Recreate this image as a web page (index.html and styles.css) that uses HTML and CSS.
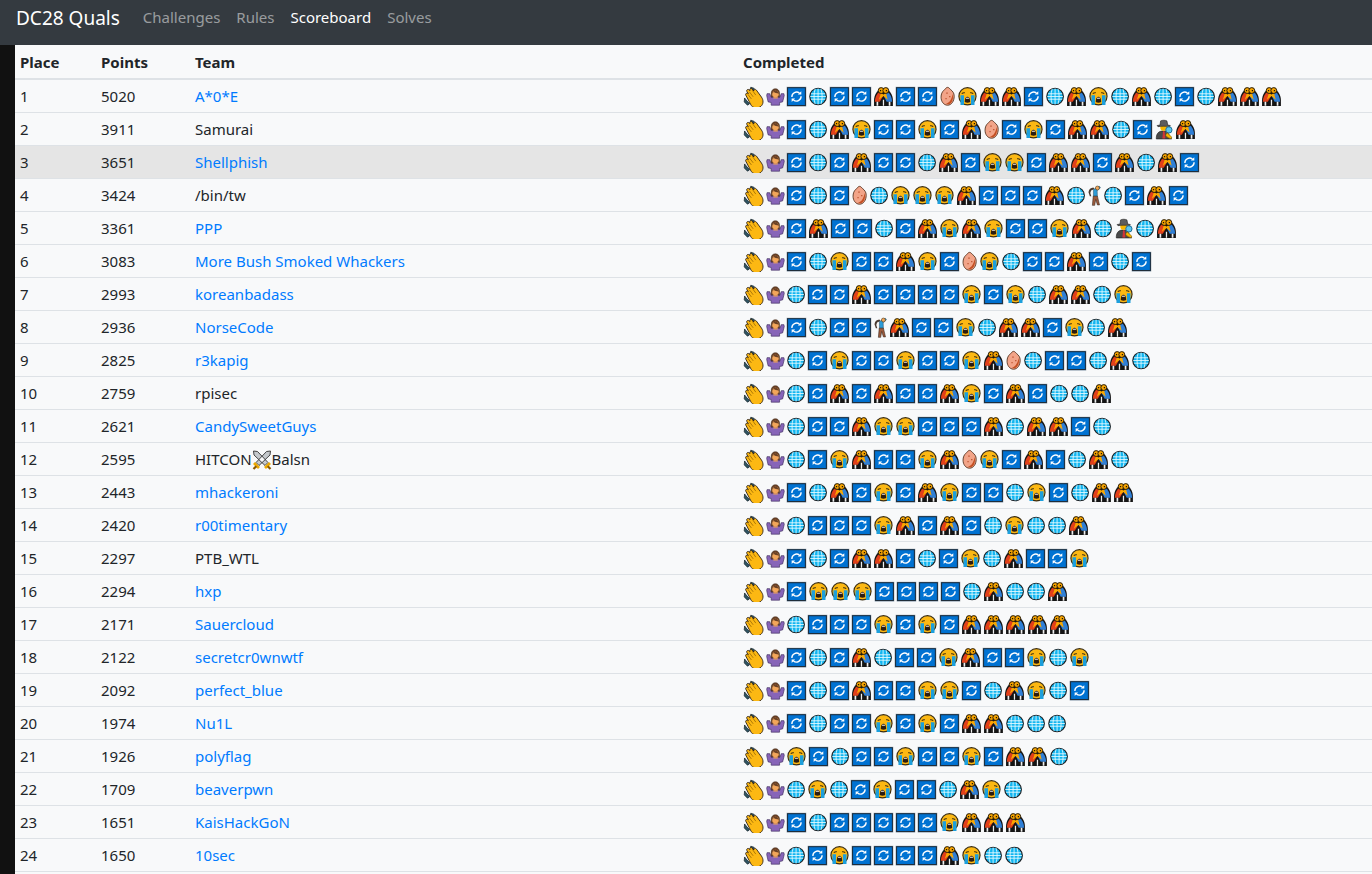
FILE: index.html
```html
<!DOCTYPE html>
<html lang="en">
<head>
<meta charset="UTF-8">
<title>DC28 Quals</title>
<link rel="stylesheet" href="styles.css">
</head>
<body>
<svg class="defs" aria-hidden="true">
  <symbol id="w" viewBox="-1 -.5 22 21">
    <path d="M7 .5l3.500 1.200-.9 2.300-3.300-1.200zM.6 11.500l-.3 4 3.300 3.400 2.200-1.500-2.600-2.700z" fill="#2f5563" stroke="#1c2a30" stroke-width=".8"/>
    <path d="M2 8.900c-1.100-1.700 1-3.300 2.500-1.900L3 5c-1-1.700 1.200-3.100 2.500-1.600l.5.600c-.8-1.700 1.400-2.900 2.500-1.500l1.500 1.900c-.4-1.600 1.700-2.300 2.700-1l5.200 7.200c2.300 3.300 2.100 7.200-.6 9.400-2.900 2.500-7.200 2.200-9.800-.7z" fill="#fcb813" stroke="#2a2018" stroke-width=".9" stroke-linejoin="round"/>
    <path d="M5.500 5.200l3.900 5.100M8.400 3.500l3.700 5.100M4 7.800l3.600 4.700" fill="none" stroke="#8a5c00" stroke-width=".7"/>
  </symbol>
  <symbol id="s" viewBox="-1.500 -1 24 22">
    <path d="M5.400 7.500c-.9-8.300 10.300-8.300 9.400 0l.4 4.500H5z" fill="#6b4226" stroke="#3a2414" stroke-width=".5"/>
    <path d="M.8 6.800h3l1.400 4h10l1.400-4h3l.4 2.200-1.800 7-3.400.7v3H5.400v-3L2 16 .4 9z" fill="#8764b8" stroke="#3b2b5c" stroke-width=".7" stroke-linejoin="round"/>
    <circle cx="10.200" cy="7.300" r="3.700" fill="#f2a65a"/>
    <path d="M6.400 6.800c.5-4.200 7.200-4.200 7.700 0-2.600-.2-5.100-.6-5.900-2-.2.900-1 1.700-1.800 2z" fill="#6b4226"/>
    <path d="M7.800 10.800h5v1.300h-5z" fill="#f2a65a"/>
  </symbol>
  <symbol id="r" viewBox="0 0 21 20">
    <rect x=".9" y="1" width="18.200" height="18.200" fill="#0072d2" stroke="#a4a8ac" stroke-width=".6"/>
    <rect x="1.500" y="1.600" width="17" height="17" fill="none" stroke="#1f2d3a" stroke-width="1"/>
    <path d="M5.600 10.400a4.400 4.400 0 0 1 7.300-3.500M14.400 9.800a4.400 4.400 0 0 1-7.300 3.500" fill="none" stroke="#fff" stroke-width="1.300"/>
    <path d="M14.600 4.900v3.300h-3.300zM5.400 15.300V12h3.300z" fill="#fff"/>
  </symbol>
  <symbol id="g" viewBox="0 0 20 20">
    <circle cx="9.600" cy="10" r="7.900" fill="#12b5f0" stroke="#1c2226" stroke-width="1.100"/>
    <path d="M2.800 7.400h13.600M2.200 10h14.800M2.800 12.600h13.600M9.600 2.500v15M6.800 3c-1.400 4-1.400 10 0 14M12.400 3c1.400 4 1.400 10 0 14" fill="none" stroke="#e8fbff" stroke-width=".8"/>
  </symbol>
  <symbol id="c" viewBox="0 0 21 20">
    <circle cx="10" cy="9.800" r="8.200" fill="#fcb813" stroke="#3a2c10" stroke-width="1.100"/>
    <path d="M4.500 7.200c1-.8 2-1 3-.8M12.500 6.400c1-.2 2 0 3 .8" fill="none" stroke="#3a2c10" stroke-width="1"/>
    <path d="M3.300 8.800h3.400v9.200H3.300zM13.300 8.800h3.400v9.200h-3.400z" fill="#1c9fdc"/>
    <path d="M7.400 15.200c0-3.200 1.100-5 2.600-5s2.600 1.800 2.600 5c-1.500.9-3.700.9-5.200 0z" fill="#2b1c10"/>
    <path d="M8.600 11.200h2.800v.9H8.600z" fill="#fff"/>
  </symbol>
  <symbol id="f" viewBox="0 0 21 20">
    <path d="M1 19v-5.500C1 8.500 4 4 7 3l3-.8 3 .8c3 1 6 5.500 6 10.500V19z" fill="#141414"/>
    <path d="M1.800 15c0-4 1.500-7.500 4.700-9.500L10 9l-3.500 6z" fill="#e2401a"/>
    <path d="M18.200 15c0-4-1.500-7.500-4.700-9.500L10 9l3 6z" fill="#2f7fd6"/>
    <path d="M3.400 15h1.600v3.800H3.400zM9.400 13h1.200v5.800H9.400zM15 15h1.600v3.800H15z" fill="#f0f0f0"/>
    <path d="M5.600 13l4.400-3.500 4 3.500-1.500-6L10 8 7.500 7z" fill="#f9a800"/>
    <circle cx="7.800" cy="4.300" r="2.800" fill="#f7a400" stroke="#1c1408" stroke-width=".9"/>
    <circle cx="12.200" cy="4.300" r="2.800" fill="#f7a400" stroke="#1c1408" stroke-width=".9"/>
    <path d="M6.600 3.800h1.200v1.100H6.600zM12.200 3.800h1.200v1.100h-1.200z" fill="#1c1408"/>
  </symbol>
  <symbol id="p" viewBox="0 0 17 20">
    <path d="M8 1.300c1.300 0 2 1.400 3 2.200 1.700 1.400 3.300 3 3.300 6.200 0 4.700-2.500 8.600-6.300 8.600s-6.200-3.700-6.200-7.600c0-3 1-5.200 2.800-6.700 1-.8 2-2.700 3.400-2.700z" fill="#f2a488" stroke="#5e3c28" stroke-width=".9"/>
    <path d="M12.800 7.500c1.100 3.800-.2 9-3.800 9.800-1.200.3-2 0-2.400-.4 3.200-.9 5.500-4.700 6.200-9.400z" fill="#c44f22"/>
    <path d="M6.800 6.200h1.300v1.100H6.800zM9.500 9.500h1.200v1.100H9.500zM6 11.500h1.100v1.100H6z" fill="#b94f2c"/>
  </symbol>
  <symbol id="k" viewBox="0 0 15 20">
    <path d="M1.300 7c.4-2.800 2-4.500 4.700-4.600l1 1.300-3.200 1.600-.8 2.400 1 3H2.600z" fill="#4a3a30"/>
    <path d="M6 4.300l5.800-3 .9 1.400-3.100 2.500.2 5.700H6z" fill="#2d9bd6" stroke="#234" stroke-width=".4"/>
    <circle cx="9.800" cy="2.900" r="1.900" fill="#f2a65a" stroke="#3a2c10" stroke-width=".5"/>
    <path d="M5.800 10.600h4l2 8.400H9.800l-1.600-5.200-1 5.600H5z" fill="#9c5a3c" stroke="#2a1c14" stroke-width=".5"/>
  </symbol>
  <symbol id="d" viewBox="0 0 20 20">
    <path d="M2.200 19c-.2-4.200 1.500-7 5.200-7.500h4l2 2 3.400 5.500z" fill="#4a4a4a" stroke="#222" stroke-width=".6"/>
    <path d="M8.600 11.600h1.500l.7 7H8z" fill="#d13438"/>
    <circle cx="9.300" cy="8" r="3.300" fill="#f7b500"/>
    <path d="M3 6.200l2.700-.4.600-4c2-.8 4-.8 6 0l.8 4 2.400.4-.4 1.100c-4-.6-7.400-.6-11.300 0z" fill="#5c5c5c" stroke="#222" stroke-width=".6"/>
    <circle cx="14.200" cy="10.400" r="3" fill="#5cc8f0" stroke="#1b6a94" stroke-width=".9"/>
    <path d="M12.400 13l-1.400 2.400c1 2 4 3 5.400 3.400l.5-1.600z" fill="#f7b500" stroke="#6a4c00" stroke-width=".5"/>
  </symbol>
</svg>

<nav class="navbar">
  <a class="brand" href="#">DC28 Quals</a>
  <a class="nav-link" href="#">Challenges</a>
  <a class="nav-link" href="#">Rules</a>
  <a class="nav-link active" href="#">Scoreboard</a>
  <a class="nav-link" href="#">Solves</a>
</nav>

<main class="content">
  <table class="scoreboard">
    <colgroup>
      <col class="col-place">
      <col class="col-points">
      <col class="col-team">
      <col>
    </colgroup>
    <thead>
      <tr><th>Place</th><th>Points</th><th>Team</th><th>Completed</th></tr>
    </thead>
    <tbody>
      <tr><td>1</td><td>5020</td><td><a href="#">A*0*E</a></td><td class="done" data-icons="wsrgrrfrrpcffrgfcgfgrgfff"></td></tr>
      <tr><td>2</td><td>3911</td><td>Samurai</td><td class="done" data-icons="wsrgfcrrcrfprcrffgrdf"></td></tr>
      <tr class="hover"><td>3</td><td>3651</td><td><a href="#">Shellphish</a></td><td class="done" data-icons="wsrgrfrrgfrccrffrfgfr"></td></tr>
      <tr><td>4</td><td>3424</td><td>/bin/tw</td><td class="done" data-icons="wsrgrpgcccfrrrfgkgrfr"></td></tr>
      <tr><td>5</td><td>3361</td><td><a href="#">PPP</a></td><td class="done" data-icons="wsrfrrgrfcfcrrcfgdgf"></td></tr>
      <tr><td>6</td><td>3083</td><td><a href="#">More Bush Smoked Whackers</a></td><td class="done" data-icons="wsrgcrrfcrpcgrrfrgr"></td></tr>
      <tr><td>7</td><td>2993</td><td><a href="#">koreanbadass</a></td><td class="done" data-icons="wsgrrfrrrrcrcgffgc"></td></tr>
      <tr><td>8</td><td>2936</td><td><a href="#">NorseCode</a></td><td class="done" data-icons="wsrgrrkfrrcgffrcgf"></td></tr>
      <tr><td>9</td><td>2825</td><td><a href="#">r3kapig</a></td><td class="done" data-icons="wsgrcrrcrrcfpgrrgfg"></td></tr>
      <tr><td>10</td><td>2759</td><td>rpisec</td><td class="done" data-icons="wsgrfrfrrfcrfrggf"></td></tr>
      <tr><td>11</td><td>2621</td><td><a href="#">CandySweetGuys</a></td><td class="done" data-icons="wsgrrfccrrrfgffrg"></td></tr>
      <tr><td>12</td><td>2595</td><td>HITCON<svg class="swords" viewBox="0 0 20 20"><path d="M1.500 1l4 .5 10.500 11-3 3L2 5zM18.500 1l-4 .5L4 12.500l3 3L18 5z" fill="#c4c8cc" stroke="#333" stroke-width=".9"/><path d="M2 13l5 5M18 13l-5 5" stroke="#eca900" stroke-width="2.800"/><path d="M1.500 19l2.800-2.800M18.500 19l-2.800-2.800" stroke="#8a5a00" stroke-width="2.200"/></svg>Balsn</td><td class="done" data-icons="wsgrcfrrcfpcrfrgfg"></td></tr>
      <tr><td>13</td><td>2443</td><td><a href="#">mhackeroni</a></td><td class="done" data-icons="wsrgfrcrfcrrgcrgff"></td></tr>
      <tr><td>14</td><td>2420</td><td><a href="#">r00timentary</a></td><td class="done" data-icons="wsgrrrcfrfrgcggf"></td></tr>
      <tr><td>15</td><td>2297</td><td>PTB_WTL</td><td class="done" data-icons="wsrgrffrgrcgfrrc"></td></tr>
      <tr><td>16</td><td>2294</td><td><a href="#">hxp</a></td><td class="done" data-icons="wsrcccrrrrgfggf"></td></tr>
      <tr><td>17</td><td>2171</td><td><a href="#">Sauercloud</a></td><td class="done" data-icons="wsgrrrcrcrfffff"></td></tr>
      <tr><td>18</td><td>2122</td><td><a href="#">secretcr0wnwtf</a></td><td class="done" data-icons="wsrgrfgrrcfrrcgc"></td></tr>
      <tr><td>19</td><td>2092</td><td><a href="#">perfect_blue</a></td><td class="done" data-icons="wsrgrfrrccrgfcgr"></td></tr>
      <tr><td>20</td><td>1974</td><td><a href="#">Nu1L</a></td><td class="done" data-icons="wsrgrrcrcrffggg"></td></tr>
      <tr><td>21</td><td>1926</td><td><a href="#">polyflag</a></td><td class="done" data-icons="wscrgrrcrrcrffg"></td></tr>
      <tr><td>22</td><td>1709</td><td><a href="#">beaverpwn</a></td><td class="done" data-icons="wsgcgrcrrgfcg"></td></tr>
      <tr><td>23</td><td>1651</td><td><a href="#">KaisHackGoN</a></td><td class="done" data-icons="wsrgrrrrrcfff"></td></tr>
      <tr><td>24</td><td>1650</td><td><a href="#">10sec</a></td><td class="done" data-icons="wsgrcrrrrfcgg"></td></tr>
    </tbody>
  </table>
</main>
<script src="script.js"></script>
</body>
</html>
```

FILE: styles.css
```css
* {
  box-sizing: border-box;
}

html, body {
  margin: 0;
  height: 100%;
  overflow: hidden;
}

body {
  background: #111;
  color: #212529;
  font-family: "Noto Sans", sans-serif;
  font-size: 15px;
  line-height: 24px;
}

a {
  color: #007bff;
  text-decoration: none;
}

.defs {
  display: none;
}

.navbar {
  display: flex;
  align-items: center;
  height: 45px;
  padding: 0 16px 10px;
  background: #343a40;
}

.brand {
  color: #fff;
  font-size: 19px;
  margin-right: 15px;
}

.nav-link {
  color: rgba(255, 255, 255, .5);
  padding: 0 8px;
  margin-bottom: 2px;
}

.nav-link.active {
  color: #fff;
}

.content {
  margin-left: 15px;
  height: calc(100% - 45px);
  background: #f8f9fa;
}

.scoreboard {
  width: 100%;
  table-layout: fixed;
  border-collapse: collapse;
}

.col-place {
  width: 81px;
}

.col-points {
  width: 94px;
}

.col-team {
  width: 548px;
}

.scoreboard th,
.scoreboard td {
  padding: 4px 5px;
  text-align: left;
  vertical-align: middle;
  white-space: nowrap;
}

.scoreboard th {
  padding-top: 5px;
  border-bottom: 2px solid #dee2e6;
  font-weight: 700;
}

.scoreboard td {
  border-bottom: 1px solid #dee2e6;
}

.hover {
  background: #e5e5e5;
}

.done {
  line-height: 0;
}

.icons {
  display: flex;
  height: 24px;
  padding-top: 1px;
  align-items: center;
}

.icon {
  height: 21px;
  width: 22px;
  flex: none;
}

.icon-w,
.icon-s {
  width: 21.5px;
}

.icon-g,
.icon-d {
  width: 21px;
}

.icon-p {
  width: 18.2px;
}

.icon-k {
  width: 16px;
}

.swords {
  width: 20px;
  height: 20px;
  vertical-align: -5px;
}
```

FILE: script.js
```js
// turn each data-icons string into a row of emoji pictures
document.querySelectorAll('.done').forEach(function (cell) {
  let html = '';
  for (const name of cell.dataset.icons) {
    html += `<svg class="icon icon-${name}"><use href="#${name}"/></svg>`;
  }
  cell.innerHTML = `<div class="icons">${html}</div>`;
});
```
